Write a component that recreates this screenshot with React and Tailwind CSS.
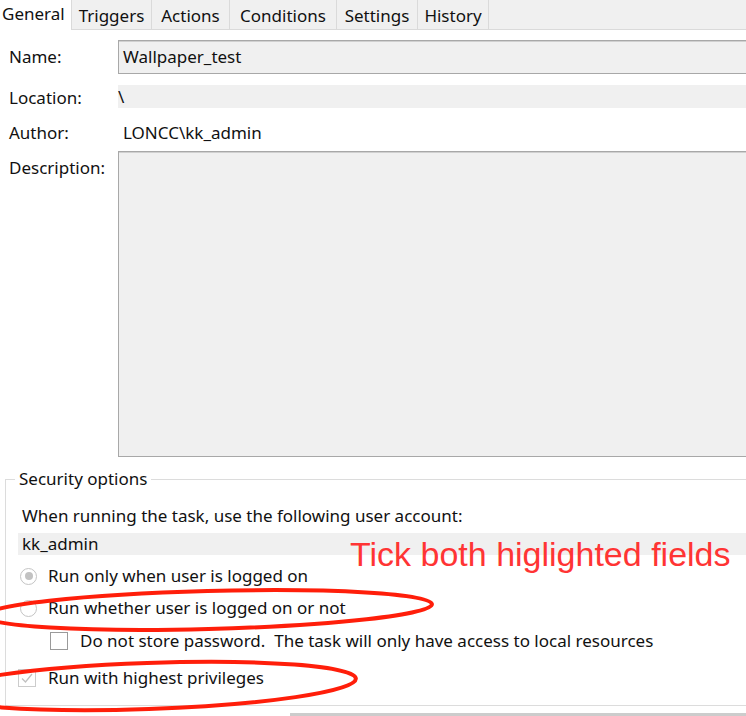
import React from "react";

const tabs = ["Triggers", "Actions", "Conditions", "Settings", "History"];
const tabWidths = ["w-[80px]", "w-[78px]", "w-[107px]", "w-[81px]", "w-[71px]"];

const Radio = ({ checked }) => (
  <span className="w-[17px] h-[17px] rounded-full border border-[#c4c4c4] bg-white flex items-center justify-center shrink-0">
    {checked && <span className="w-[8px] h-[8px] rounded-full bg-[#c2c2c2]" />}
  </span>
);

const Checkbox = ({ checked, disabled }) => (
  <span
    className={`w-[18px] h-[18px] border bg-white flex items-center justify-center shrink-0 ${
      disabled ? "border-[#cccccc]" : "border-[#9a9a9a]"
    }`}
  >
    {checked && (
      <svg width="14" height="14" viewBox="0 0 14 14">
        <path d="M2 7.5 L5.5 11 L12 3" fill="none" stroke="#c0c0c0" strokeWidth="1.3" />
      </svg>
    )}
  </span>
);

export default function App() {
  return (
    <div className="relative w-[746px] h-[716px] overflow-hidden bg-white text-[#111] font-['Noto_Sans',sans-serif] text-[17px]">
      {/* Tab strip */}
      <div className="flex h-[30px] bg-[#f0f0f0]">
        <div className="w-[71px] bg-white pl-[2px] pt-[2px] leading-[24px]">General</div>
        {tabs.map((t, i) => (
          <div
            key={t}
            className={`${tabWidths[i]} border-l border-b border-[#dadada] flex items-center justify-center pt-[2px]`}
          >
            {t}
          </div>
        ))}
        <div className="flex-1 border-l border-b border-[#dadada]" />
      </div>

      {/* General fields */}
      <div className="flex flex-col pl-[9px] pt-[10px]">
        <div className="flex items-center h-[34px]">
          <span className="w-[109px]">Name:</span>
          <div className="flex-1 -mr-[4px] h-[34px] border border-[#a8a8a8] shadow-[inset_0_1px_0_#d0d0d0] bg-[#f0f0f0] flex items-center pl-[4px]">
            Wallpaper_test
          </div>
        </div>
        <div className="flex items-center h-[23px] mt-[11px]">
          <span className="w-[109px] pt-[3px]">Location:</span>
          <div className="flex-1 h-[23px] bg-[#f0f0f0] flex items-center">\</div>
        </div>
        <div className="flex items-center h-[23px] mt-[13px]">
          <span className="w-[109px]">Author:</span>
          <span className="pl-[5px]">LONCC\kk_admin</span>
        </div>
        <div className="flex items-start mt-[7px]">
          <span className="w-[109px] pt-[4px]">Description:</span>
          <div className="flex-1 -mr-[4px] h-[306px] border border-[#a8a8a8] shadow-[inset_0_1px_0_#d0d0d0] bg-[#f0f0f0]" />
        </div>
      </div>

      {/* Security options */}
      <fieldset className="ml-[5px] -mr-[4px] mt-[12px] border border-[#dcdcdc] h-[237px] px-0">
        <legend className="ml-[9px] px-[4px] leading-[20px]">Security options</legend>
        <div className="pl-[16px] mt-[16px] leading-[22px]">When running the task, use the following user account:</div>
        <div className="ml-[12px] mt-[6px] h-[22px] bg-[#f0f0f0] flex items-center pl-[4px]">kk_admin</div>
        <div className="flex items-center gap-[11px] ml-[14px] mt-[11px] h-[20px]">
          <Radio checked />
          <span>Run only when user is logged on</span>
        </div>
        <div className="flex items-center gap-[11px] ml-[14px] mt-[12px] h-[20px]">
          <Radio />
          <span>Run whether user is logged on or not</span>
        </div>
        <div className="flex items-center gap-[12px] ml-[44px] mt-[13px] h-[20px]">
          <Checkbox />
          <span>Do not store password.&nbsp; The task will only have access to local resources</span>
        </div>
        <div className="flex items-center gap-[12px] ml-[12px] mt-[17px] h-[20px]">
          <Checkbox checked disabled />
          <span>Run with highest privileges</span>
        </div>
      </fieldset>
      <div className="ml-[290px] mt-[7px] h-[6px] bg-[#cccccc]" />

      {/* Annotation overlay */}
      <div className="absolute left-[350px] top-[535px] text-[#ff3434] text-[34px] leading-[38px] font-['Liberation_Sans',sans-serif]">
        Tick both higlighted fields
      </div>
      <svg className="absolute inset-0 pointer-events-none" width="746" height="716">
        <ellipse cx="208" cy="610" rx="224" ry="19" transform="rotate(-1.5 208 610)" fill="none" stroke="#ff1e0a" strokeWidth="4" />
        <ellipse cx="148" cy="686" rx="208" ry="23" transform="rotate(-2 148 686)" fill="none" stroke="#ff1e0a" strokeWidth="4" />
      </svg>
    </div>
  );
}
